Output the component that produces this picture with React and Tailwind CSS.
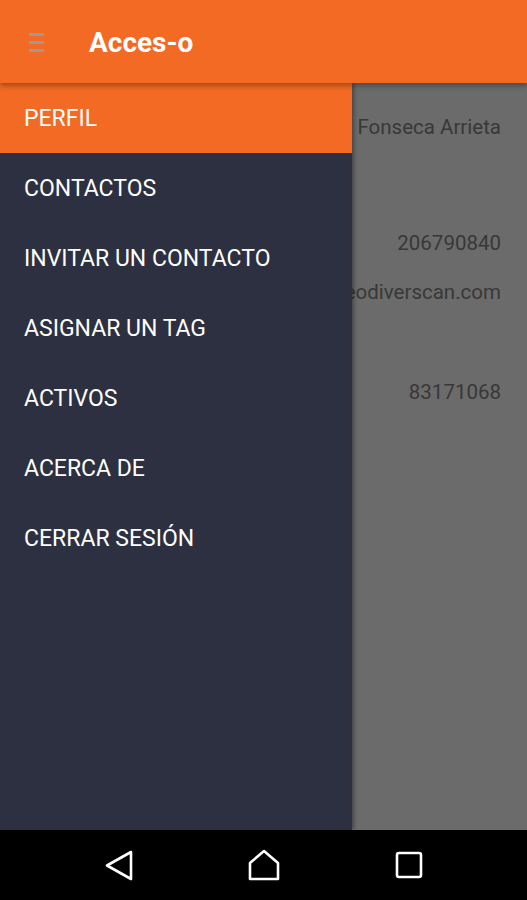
import React from 'react'

const items = ['PERFIL', 'CONTACTOS', 'INVITAR UN CONTACTO', 'ASIGNAR UN TAG', 'ACTIVOS', 'ACERCA DE', 'CERRAR SESIÓN']

const App = () => {
  return (
    <div className="w-[527px] h-[900px] flex flex-col bg-black overflow-hidden" style={{ fontFamily: 'Roboto, "Noto Sans", sans-serif' }}>
      {/* Toolbar */}
      <header className="relative z-20 h-[83px] shrink-0 bg-[#f26a23] flex items-center shadow-[0_3px_5px_rgba(0,0,0,0.3)]">
        <div className="ml-[29px] w-[15px] flex flex-col gap-[5px] mt-[2px]">
          <span className="block h-[3px] bg-[#9a9a9a]" />
          <span className="block h-[3px] bg-[#9a9a9a]" />
          <span className="block h-[3px] bg-[#9a9a9a]" />
        </div>
        <h1 className="ml-[45px] mt-[3px] text-[28px] font-bold text-white">Acces-o</h1>
      </header>

      {/* Body */}
      <div className="flex flex-1 min-h-0">
        {/* Drawer */}
        <nav className="relative z-10 w-[352px] shrink-0 bg-[#2d3040] flex flex-col shadow-[2px_0_4px_rgba(0,0,0,0.35)]">
          {items.map((label, i) => (
            <div
              key={label}
              className={`h-[70px] flex items-center pl-[24px] pt-[2px] text-[23px] text-white ${i === 0 ? 'bg-[#f26a23]' : ''}`}
            >
              {label}
            </div>
          ))}
        </nav>

        {/* Dimmed content */}
        <div className="flex-1 bg-[#6b6b6b] overflow-hidden flex flex-col items-end pr-[26px] text-[20.5px] leading-[24px] text-[#383838]">
          <div className="mt-[32px] whitespace-nowrap shrink-0">Fonseca Arrieta</div>
          <div className="mt-[92px] whitespace-nowrap shrink-0">206790840</div>
          <div className="mt-[25px] whitespace-nowrap shrink-0">info@geodiverscan.com</div>
          <div className="mt-[76px] whitespace-nowrap shrink-0">83171068</div>
        </div>
      </div>

      {/* Navigation bar */}
      <div className="h-[70px] shrink-0 bg-black flex items-center justify-center gap-[115px]">
        <svg width="28" height="31" viewBox="0 0 28 31" fill="none" stroke="white" strokeWidth="2.6" strokeLinejoin="round">
          <path d="M26 2 L2 15.5 L26 29 Z" />
        </svg>
        <svg width="32" height="32" viewBox="0 0 32 32" fill="none" stroke="white" strokeWidth="2.6" strokeLinejoin="round">
          <path d="M2 14 L16 2 L30 14 L30 30 L2 30 Z" />
        </svg>
        <svg width="28" height="28" viewBox="0 0 28 28" fill="none" stroke="white" strokeWidth="2.6">
          <rect x="2" y="2" width="24" height="24" rx="2" />
        </svg>
      </div>
    </div>
  )
}

export default App
